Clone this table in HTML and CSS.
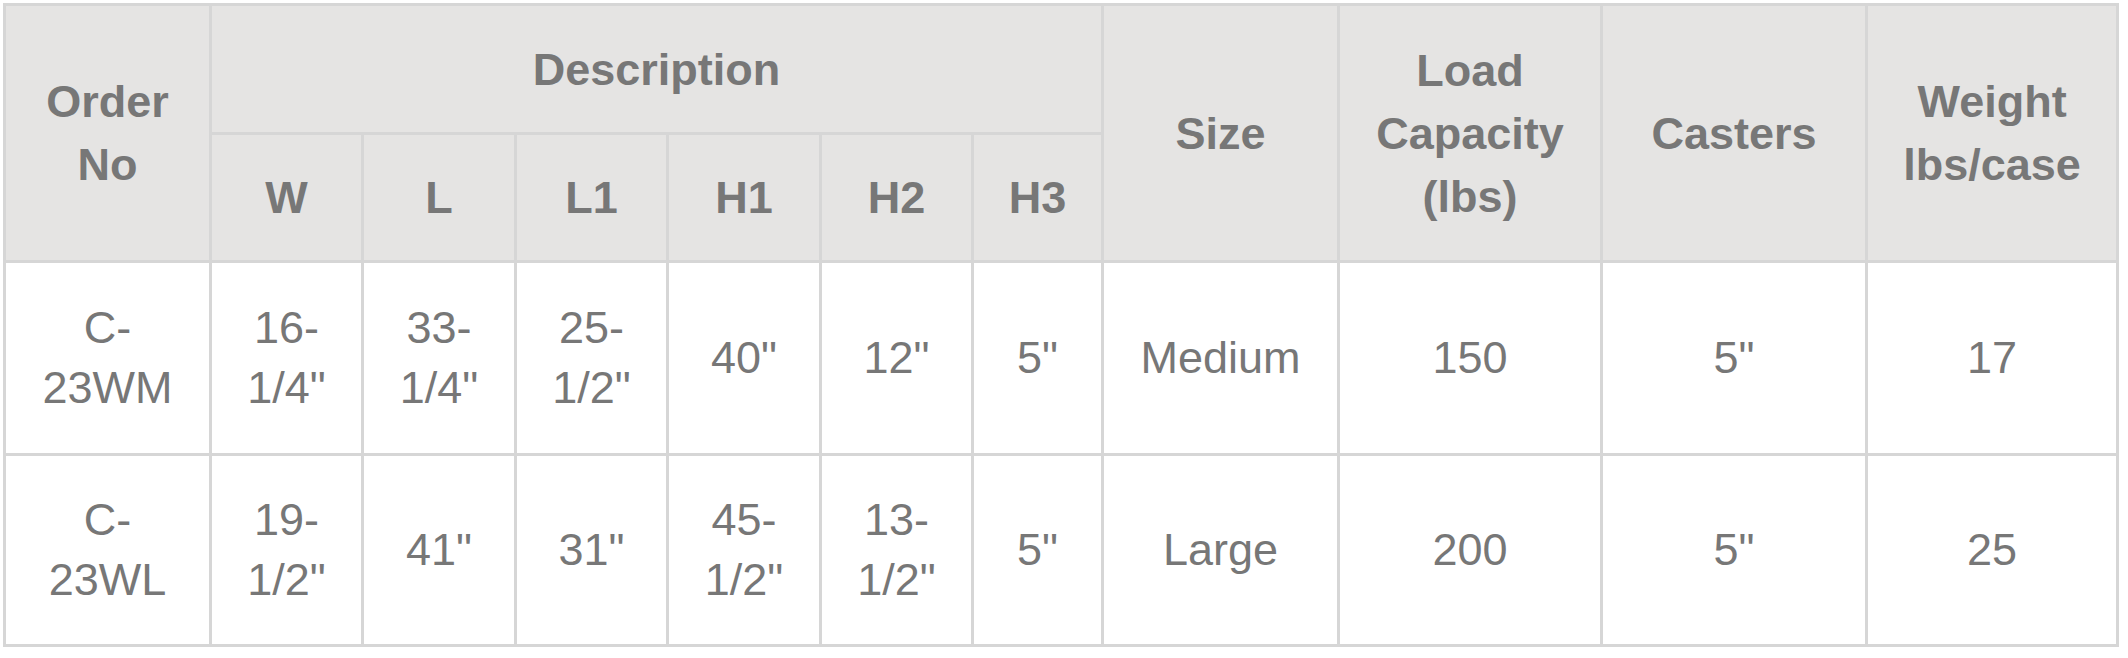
FILE: index.html
```html
<!DOCTYPE html>
<html>
<head>
<meta charset="utf-8">
<link rel="stylesheet" href="styles.css">
</head>
<body>
<table class="spec">
  <colgroup>
    <col class="c-order">
    <col class="c-dim">
    <col class="c-dim-b">
    <col class="c-dim">
    <col class="c-dim-b">
    <col class="c-dim">
    <col class="c-h3">
    <col class="c-size">
    <col class="c-load">
    <col class="c-casters">
    <col class="c-weight">
  </colgroup>
  <thead>
    <tr class="hr1">
      <th rowspan="2">Order No</th>
      <th colspan="6">Description</th>
      <th rowspan="2">Size</th>
      <th rowspan="2">Load Capacity (lbs)</th>
      <th rowspan="2">Casters</th>
      <th rowspan="2">Weight lbs/case</th>
    </tr>
    <tr class="hr2">
      <th>W</th>
      <th>L</th>
      <th>L1</th>
      <th>H1</th>
      <th>H2</th>
      <th>H3</th>
    </tr>
  </thead>
  <tbody>
    <tr class="br1">
      <td>C-23WM</td>
      <td>16-1/4"</td>
      <td>33-1/4"</td>
      <td>25-1/2"</td>
      <td>40"</td>
      <td>12"</td>
      <td>5"</td>
      <td>Medium</td>
      <td>150</td>
      <td>5"</td>
      <td>17</td>
    </tr>
    <tr class="br2">
      <td>C-23WL</td>
      <td>19-1/2"</td>
      <td>41"</td>
      <td>31"</td>
      <td>45-1/2"</td>
      <td>13-1/2"</td>
      <td>5"</td>
      <td>Large</td>
      <td>200</td>
      <td>5"</td>
      <td>25</td>
    </tr>
  </tbody>
</table>
</body>
</html>
```

FILE: styles.css
```css
html, body {
  margin: 0;
  padding: 0;
  background: #ffffff;
}

body {
  padding: 3px 0 0 3px;
  font-family: "Liberation Sans", Arial, sans-serif;
  color: #777777;
}

.spec {
  table-layout: fixed;
  border-collapse: separate;
  border-spacing: 0;
  width: 2116px;
  border-top: 3px solid #d6d6d6;
  border-left: 3px solid #d6d6d6;
}

.c-order { width: 206px; }
.c-dim { width: 152px; }
.c-dim-b { width: 153px; }
.c-h3 { width: 130px; }
.c-size { width: 236px; }
.c-load { width: 263px; }
.c-casters { width: 265px; }
.c-weight { width: 251px; }

.spec th,
.spec td {
  border-right: 3px solid #d6d6d6;
  border-bottom: 3px solid #d6d6d6;
  padding: 0 22px;
  text-align: center;
  vertical-align: middle;
  font-size: 45px;
  color: #777777;
}

.spec th {
  background: #e5e4e3;
  font-weight: bold;
  line-height: 63px;
}

.spec td {
  background: #ffffff;
  font-weight: normal;
  line-height: 60px;
}

.hr1 { height: 129px; }
.hr2 { height: 128px; }
.br1 { height: 193px; }
.br2 { height: 191px; }
```
